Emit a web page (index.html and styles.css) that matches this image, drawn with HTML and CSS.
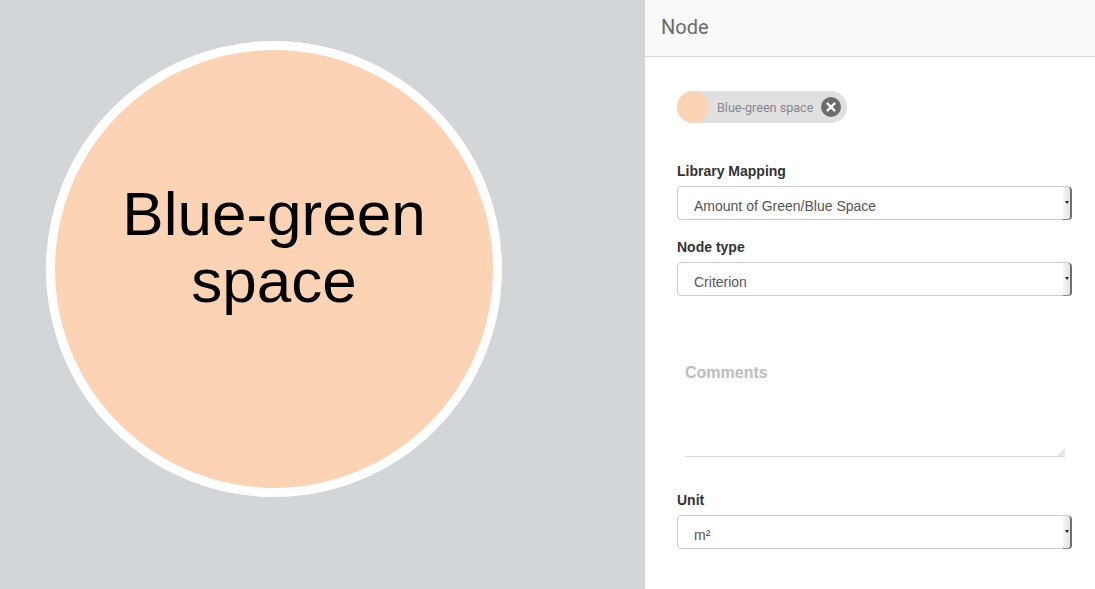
FILE: index.html
```html
<!DOCTYPE html>
<html>
<head>
<meta charset="utf-8">
<link rel="stylesheet" href="styles.css">
</head>
<body>
<div class="app">
  <div class="canvas">
    <div class="node">
      <div class="node-label">Blue-green<br>space</div>
    </div>
  </div>
  <aside class="panel">
    <div class="panel-header">Node</div>
    <div class="panel-body">
      <div class="chip">
        <span class="chip-avatar"></span>
        <span class="chip-text">Blue-green space</span>
        <span class="chip-close">
          <svg width="20" height="20" viewBox="0 0 20 20"><circle cx="10" cy="10" r="10" fill="#6c6c6c"/><path d="M6.6 6.6 L13.4 13.4 M13.4 6.6 L6.6 13.4" stroke="#fff" stroke-width="2.4" stroke-linecap="round"/></svg>
        </span>
      </div>

      <div class="group">
        <div class="label">Library Mapping</div>
        <div class="select"><span class="select-value">Amount of Green/Blue Space</span><span class="select-arrow"></span></div>
      </div>

      <div class="group">
        <div class="label">Node type</div>
        <div class="select"><span class="select-value">Criterion</span><span class="select-arrow"></span></div>
      </div>

      <div class="comments-wrap">
        <textarea class="comments" placeholder="Comments"></textarea>
      </div>

      <div class="group unit">
        <div class="label">Unit</div>
        <div class="select"><span class="select-value">m²</span><span class="select-arrow"></span></div>
      </div>
    </div>
  </aside>
</div>
</body>
</html>
```

FILE: styles.css
```css
* { box-sizing: border-box; }
html, body { margin: 0; padding: 0; }
body {
  width: 1095px;
  height: 589px;
  overflow: hidden;
  font-family: "Liberation Sans", Arial, sans-serif;
}
.app {
  display: flex;
  height: 589px;
}
.canvas {
  width: 645px;
  flex: none;
  background: #d3d6d9;
  padding: 41px 0 0 46px;
}
.node {
  width: 456px;
  height: 456px;
  border-radius: 50%;
  border: 9px solid #ffffff;
  background: #fdd3b5;
  display: flex;
  align-items: center;
  justify-content: center;
  padding-bottom: 44px;
}
.node-label {
  font-family: "Liberation Sans", Arial, sans-serif;
  font-size: 62px;
  line-height: 67px;
  color: #000;
  text-align: center;
}
.panel {
  flex: 1;
  background: #fff;
  display: flex;
  flex-direction: column;
}
.panel-header {
  height: 57px;
  background: #f9f9f9;
  border-bottom: 1px solid #dddddd;
  padding: 15px 16px 0;
  font-family: Roboto, "Liberation Sans", sans-serif;
  font-size: 20px;
  line-height: 24px;
  color: #6b6b6b;
}
.panel-body {
  padding: 34px 23px 0 32px;
  display: flex;
  flex-direction: column;
  align-items: flex-start;
}
.chip {
  display: flex;
  align-items: center;
  height: 32px;
  background: #e0e0e0;
  border-radius: 16px;
  padding-right: 6px;
  margin-bottom: 38px;
}
.chip-avatar {
  width: 32px;
  height: 32px;
  border-radius: 50%;
  background: #fdd3b5;
}
.chip-text {
  margin: 0 8px;
  font-family: Roboto, "Liberation Sans", sans-serif;
  font-size: 12.6px;
  color: #8a8590;
}
.chip-close {
  width: 20px;
  height: 20px;
  display: flex;
}
.group {
  width: 395px;
  margin-bottom: 17px;
}
.label {
  font-size: 14px;
  line-height: 20px;
  font-weight: bold;
  color: #333;
  margin-bottom: 5px;
}
.select {
  position: relative;
  height: 34px;
  border: 1px solid #cccccc;
  border-radius: 4px;
  padding: 9px 16px 3px;
  font-size: 14px;
  line-height: 20px;
  color: #555;
  display: flex;
}
.select-value { flex: 1; }
.select-arrow {
  position: absolute;
  right: -1px;
  top: 0;
  bottom: -1px;
  width: 9px;
  background: linear-gradient(to right, #f4f4f4, #e4e4e4);
  border-right: 2px solid #6f6f6f;
  border-bottom: 1px solid #8a8a8a;
  border-radius: 0 4px 4px 0;
}
.select-arrow::after {
  content: "";
  position: absolute;
  left: 2px;
  top: 14px;
  border-left: 2.5px solid transparent;
  border-right: 2.5px solid transparent;
  border-top: 3px solid #222;
}
.comments-wrap {
  position: relative;
  margin: 40px 0 0 8px;
}
.comments-wrap::after {
  content: "";
  position: absolute;
  right: 0;
  bottom: 1px;
  width: 8px;
  height: 8px;
  background: linear-gradient(135deg, transparent 50%, #e8e8e8 50%);
}
.comments {
  display: block;
  width: 380px;
  height: 104px;
  padding: 10px 0;
  border: none;
  border-bottom: 1px solid #dddddd;
  outline: none;
  resize: none;
  font-family: "Liberation Sans", Arial, sans-serif;
  font-size: 16px;
  line-height: 20px;
  font-weight: bold;
  color: #555;
  background: #fff;
}
.comments::placeholder {
  color: #bdbdbd;
}
.unit {
  margin-top: 33px;
}
```
